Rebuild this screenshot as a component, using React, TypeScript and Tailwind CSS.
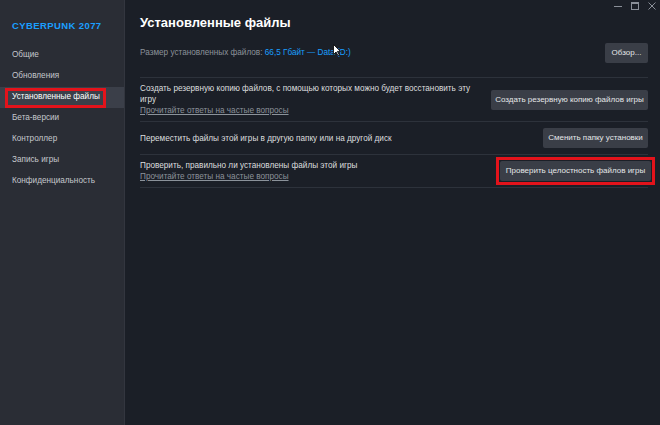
import React from "react";

const font = { fontFamily: "Arial, 'Liberation Sans', sans-serif" };

function Btn({ children, w }: { children: React.ReactNode; w: string }) {
  return (
    <div className={`h-[20px] ${w} flex items-center justify-center whitespace-nowrap rounded-[2px] bg-[#3a3e47] text-[8px] text-[#e4e6e8]`}>
      {children}
    </div>
  );
}

export default function App() {
  const items = ["Общие", "Обновления", "Установленные файлы", "Бета-версии", "Контроллер", "Запись игры", "Конфиденциальность"];
  return (
    <div className="flex h-[425px] w-[660px] overflow-hidden bg-[#1b1f27]" style={font}>
      <div className="w-[125px] shrink-0 bg-[#2a2d35] border-r border-[#33363f]">
        <div className="h-[45px] pt-[19px] pl-[12px] text-[9.5px] font-bold tracking-[0.4px] text-[#1a9fff] leading-[14px]">
          CYBERPUNK 2077
        </div>
        <div className="flex flex-col">
          {items.map((t, i) =>
            i === 2 ? (
              <div key={t} className="h-[21px] bg-[#3b3f49] flex items-center pl-[5px]">
                <div className="h-[20px] flex items-center border-[3px] border-[#e3131b] pl-[4px] pr-[3px] text-[8.2px] text-white">
                  {t}
                </div>
              </div>
            ) : (
              <div key={t} className="h-[21px] flex items-center pl-[12px] text-[8.2px] text-[#c4c7cc]">
                {t}
              </div>
            )
          )}
        </div>
      </div>
      <div className="relative flex-1 pl-[15px] pr-[12px]">
        <div className="absolute right-[3px] top-[1px] flex items-center gap-[7px] text-[#8a8f98]">
          <svg width="10" height="10" viewBox="0 0 10 10"><path d="M1 5.5h8" stroke="currentColor" strokeWidth="1" /></svg>
          <svg width="10" height="10" viewBox="0 0 10 10"><rect x="1.5" y="1.5" width="7" height="7" fill="none" stroke="currentColor" strokeWidth="1" /><path d="M1.5 2.5h7" stroke="currentColor" strokeWidth="1" /></svg>
          <svg width="10" height="10" viewBox="0 0 10 10"><path d="M1.5 1.5l7 7M8.5 1.5l-7 7" stroke="currentColor" strokeWidth="1" /></svg>
        </div>
        <div className="h-[43px] pt-[14px]">
          <div className="text-[13px] font-bold leading-[18px] text-white">Установленные файлы</div>
        </div>
        <div className="h-[20px] flex items-center justify-between">
          <div className="relative text-[8.2px] text-[#8b929a]">
            Размер установленных файлов: <span className="text-[#1a9fff]">66,5 Гбайт — Data (D:)</span>
            <svg className="absolute left-[193px] top-[-3px]" width="8" height="12" viewBox="0 0 8 12">
              <path d="M0.5 0.5v10l2.5-2.5 2 3.5 1.3-0.7-2-3.4h3.2z" fill="#fff" stroke="#000" strokeWidth="0.8" />
            </svg>
          </div>
          <Btn w="w-[43px]">Обзор...</Btn>
        </div>
        <div className="mt-[14px] h-px bg-[#2d323b]" />
        <div className="h-[43px] flex items-center justify-between">
          <div className="text-[8.2px] leading-[11px] text-[#dcdedf] w-[335px]">
            Создать резервную копию файлов, с помощью которых можно будет восстановить эту игру
            <div className="text-[#8b929a] underline">Прочитайте ответы на частые вопросы</div>
          </div>
          <Btn w="w-[157px]">Создать резервную копию файлов игры</Btn>
        </div>
        <div className="h-px bg-[#2d323b]" />
        <div className="h-[32px] flex items-center justify-between">
          <div className="text-[8.2px] leading-[11px] text-[#dcdedf]">
            Переместить файлы этой игры в другую папку или на другой диск
          </div>
          <Btn w="w-[105px]">Сменить папку установки</Btn>
        </div>
        <div className="h-px bg-[#2d323b]" />
        <div className="h-[32px] flex items-center justify-between">
          <div className="text-[8.2px] leading-[11px] text-[#dcdedf]">
            Проверить, правильно ли установлены файлы этой игры
            <div className="text-[#8b929a] underline">Прочитайте ответы на частые вопросы</div>
          </div>
          <div className="mr-[-7px] border-[3px] border-[#e3131b] p-[1px]">
            <Btn w="w-[151px]">Проверить целостность файлов игры</Btn>
          </div>
        </div>
        <div className="h-px bg-[#2d323b]" />
      </div>
    </div>
  );
}
